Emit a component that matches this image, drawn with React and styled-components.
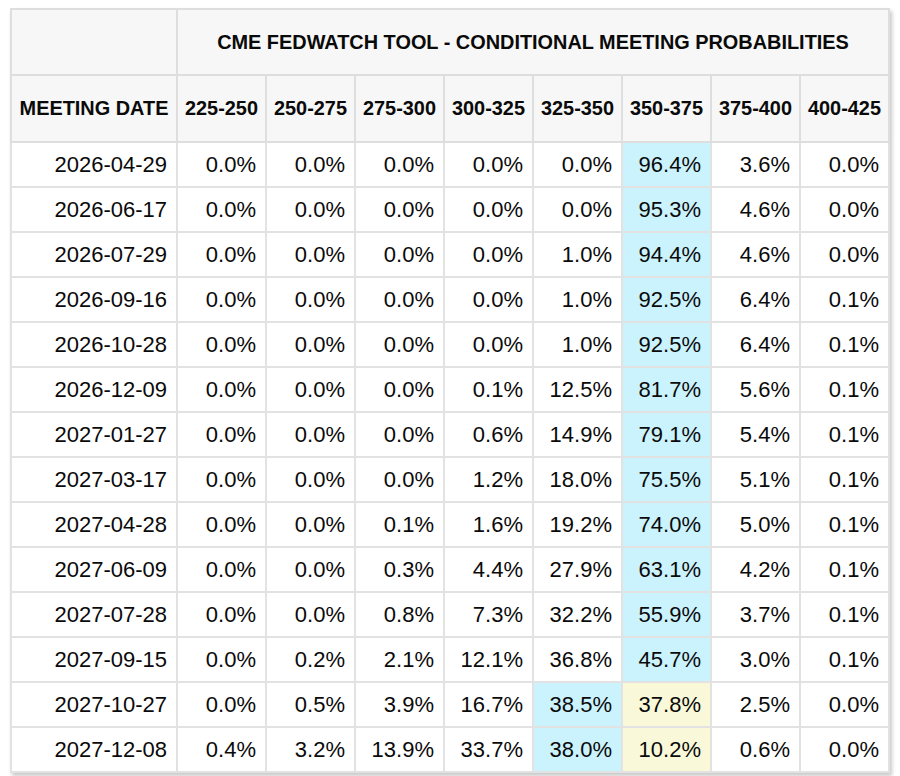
import styled, { createGlobalStyle } from 'styled-components'

const ranges = ['225-250', '250-275', '275-300', '300-325', '325-350', '350-375', '375-400', '400-425']

const rows = [
    ['2026-04-29', [0.0, 0.0, 0.0, 0.0, 0.0, 96.4, 3.6, 0.0], { 5: 'blue' }],
    ['2026-06-17', [0.0, 0.0, 0.0, 0.0, 0.0, 95.3, 4.6, 0.0], { 5: 'blue' }],
    ['2026-07-29', [0.0, 0.0, 0.0, 0.0, 1.0, 94.4, 4.6, 0.0], { 5: 'blue' }],
    ['2026-09-16', [0.0, 0.0, 0.0, 0.0, 1.0, 92.5, 6.4, 0.1], { 5: 'blue' }],
    ['2026-10-28', [0.0, 0.0, 0.0, 0.0, 1.0, 92.5, 6.4, 0.1], { 5: 'blue' }],
    ['2026-12-09', [0.0, 0.0, 0.0, 0.1, 12.5, 81.7, 5.6, 0.1], { 5: 'blue' }],
    ['2027-01-27', [0.0, 0.0, 0.0, 0.6, 14.9, 79.1, 5.4, 0.1], { 5: 'blue' }],
    ['2027-03-17', [0.0, 0.0, 0.0, 1.2, 18.0, 75.5, 5.1, 0.1], { 5: 'blue' }],
    ['2027-04-28', [0.0, 0.0, 0.1, 1.6, 19.2, 74.0, 5.0, 0.1], { 5: 'blue' }],
    ['2027-06-09', [0.0, 0.0, 0.3, 4.4, 27.9, 63.1, 4.2, 0.1], { 5: 'blue' }],
    ['2027-07-28', [0.0, 0.0, 0.8, 7.3, 32.2, 55.9, 3.7, 0.1], { 5: 'blue' }],
    ['2027-09-15', [0.0, 0.2, 2.1, 12.1, 36.8, 45.7, 3.0, 0.1], { 5: 'blue' }],
    ['2027-10-27', [0.0, 0.5, 3.9, 16.7, 38.5, 37.8, 2.5, 0.0], { 4: 'blue', 5: 'yellow' }],
    ['2027-12-08', [0.4, 3.2, 13.9, 33.7, 38.0, 10.2, 0.6, 0.0], { 4: 'blue', 5: 'yellow' }],
]

const GlobalStyle = createGlobalStyle`
    body {
        margin: 0;
        background: #ffffff;
        font-family: "Liberation Sans", Arial, sans-serif;
    }
`

export default function App() {
    return (
        <Page>
            <GlobalStyle />
            <Table>
                <colgroup>
                    <col style={{ width: 166 }} />
                    {ranges.map((r) => <col key={r} />)}
                </colgroup>
                <thead>
                    <TitleRow>
                        <HeadCell />
                        <HeadCell colSpan={8}>CME FEDWATCH TOOL - CONDITIONAL MEETING PROBABILITIES</HeadCell>
                    </TitleRow>
                    <ColumnRow>
                        <HeadCell>MEETING DATE</HeadCell>
                        {ranges.map((r) => <HeadCell key={r}>{r}</HeadCell>)}
                    </ColumnRow>
                </thead>
                <tbody>
                    {rows.map(([date, values, marks]) => (
                        <Row key={date}>
                            <Cell>{date}</Cell>
                            {values.map((v, i) => (
                                <Cell key={i} tone={marks[i]}>{v.toFixed(1)}%</Cell>
                            ))}
                        </Row>
                    ))}
                </tbody>
            </Table>
        </Page>
    )
}

const Page = styled.div`
    padding: 8px 10px;
`

const Table = styled.table`
    width: 880px;
    border-collapse: collapse;
    table-layout: fixed;
    border: 2px solid #dedede;
    box-shadow: 2px 3px 4px rgba(0, 0, 0, 0.22);
`

const TitleRow = styled.tr`
    height: 66px;
`

const ColumnRow = styled.tr`
    height: 67px;
`

const HeadCell = styled.th`
    background: #f7f7f7;
    border: 2px solid #dedede;
    font-size: 19.9px;
    font-weight: 700;
    color: #0a0a0a;
    text-align: center;
    padding: 0 3px;
    white-space: nowrap;
`

const toneColors = {
    blue: '#caf3fd',
    yellow: '#f9f9d9',
}

const Row = styled.tr`
    height: 45px;
`

const Cell = styled.td`
    background: ${({ tone }) => toneColors[tone] || '#ffffff'};
    border: 2px solid #e2e2e2;
    font-size: 22px;
    color: #0a0a0a;
    text-align: right;
    padding: 0 9px 0 4px;
    white-space: nowrap;
`
